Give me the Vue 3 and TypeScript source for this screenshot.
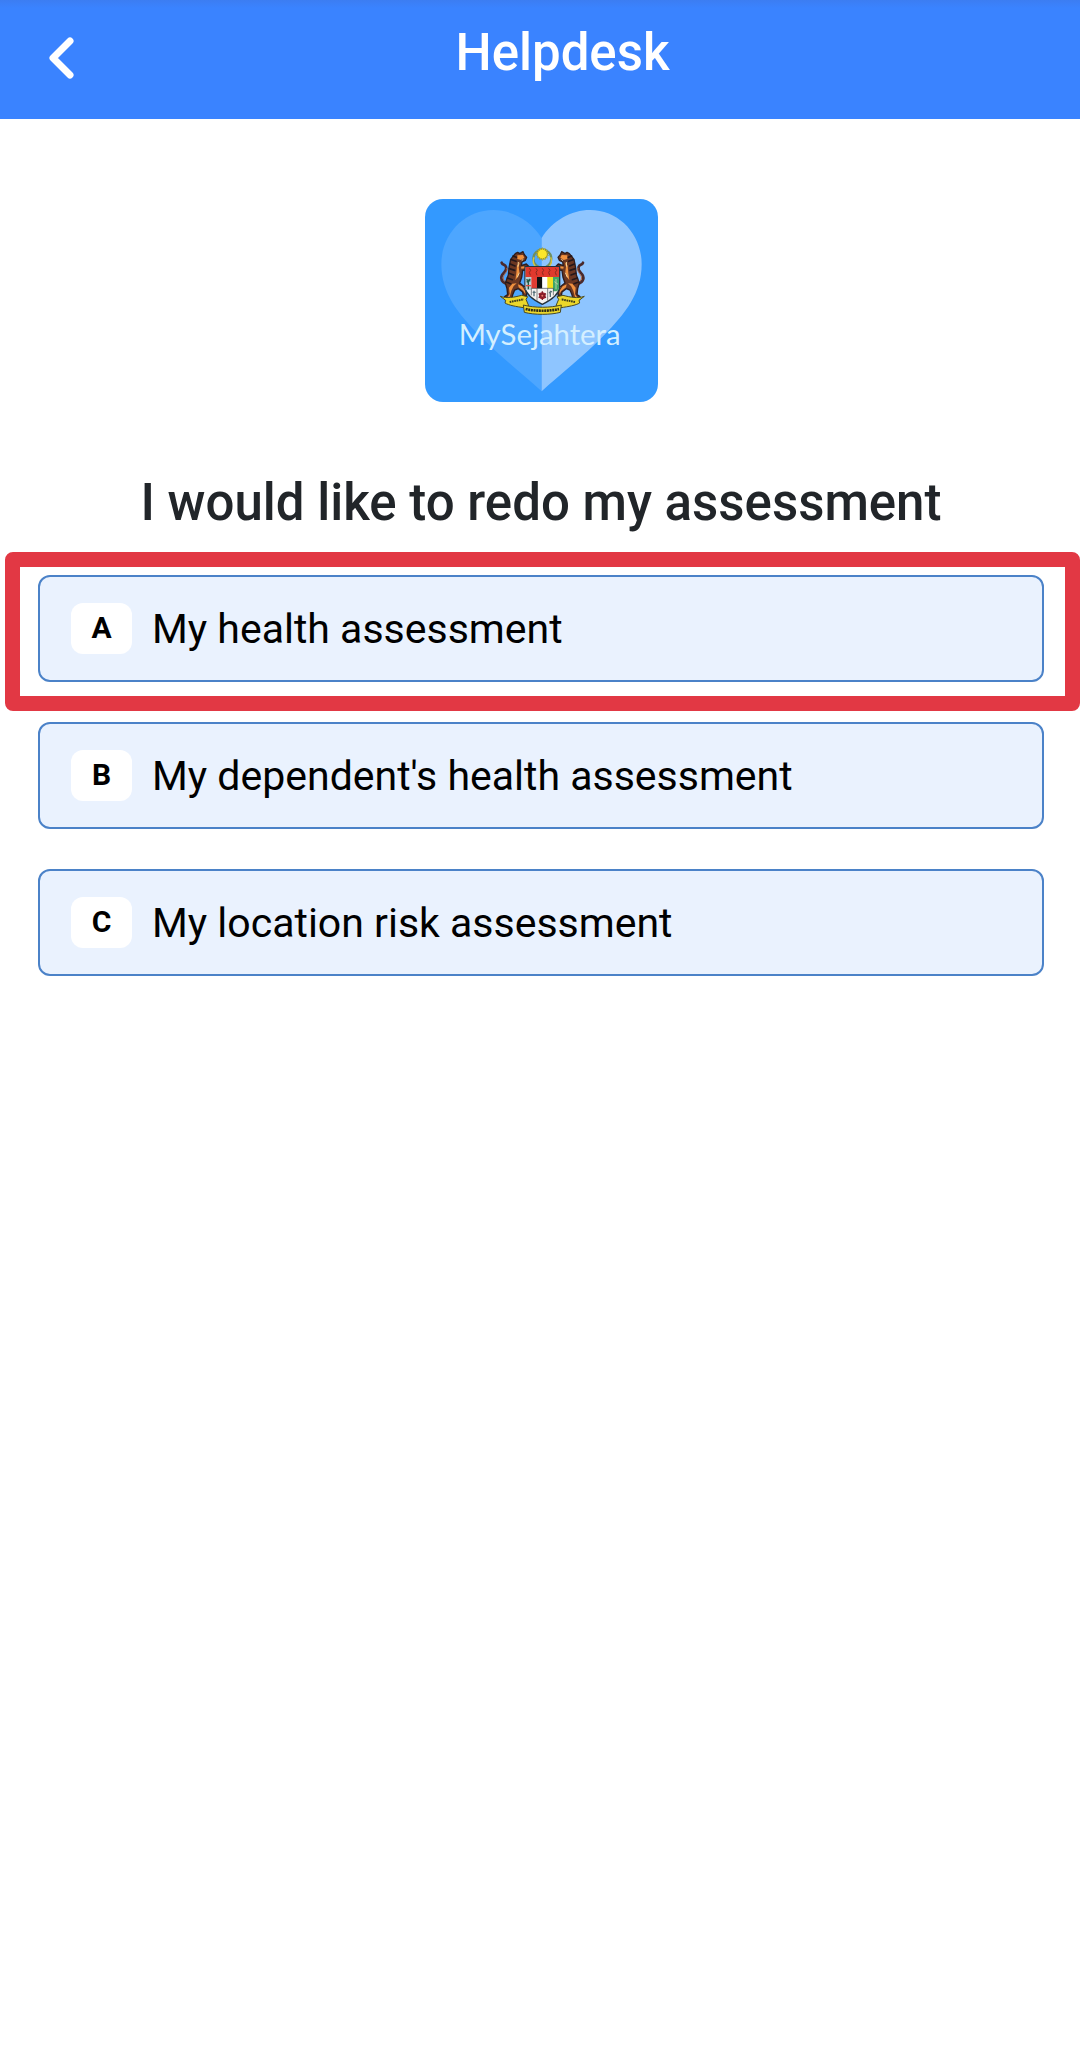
<script setup lang="ts">
interface Option {
  letter: string
  label: string
  highlighted?: boolean
}

const options: Option[] = [
  { letter: 'A', label: 'My health assessment', highlighted: true },
  { letter: 'B', label: "My dependent's health assessment" },
  { letter: 'C', label: 'My location risk assessment' },
]

const rays = Array.from({ length: 14 }, (_, i) => (i * 360) / 14)
const krises = [360, 380, 399, 418, 438]
</script>

<template>
  <div class="page">
    <header class="bar">
      <button class="back" type="button" aria-label="Back">
        <svg width="26" height="44" viewBox="0 0 26 44" fill="none" aria-hidden="true">
          <path d="M22 5 L5 22 L22 39" stroke="#fff" stroke-width="7" stroke-linecap="round" stroke-linejoin="round" />
        </svg>
      </button>
      <h1 class="title">Helpdesk</h1>
    </header>

    <main class="content">
      <svg class="logo" viewBox="47 57 699 609" role="img" aria-label="MySejahtera">
        <rect x="47" y="57" width="699" height="609" rx="54" fill="#3399ff" />
        <path d="M397 174 C365 122 308 90 252 90 C164 90 96 164 96 252 C96 340 146 400 210 466 C272 530 338 580 397 634 Z" fill="#4da6ff" />
        <path d="M397 174 C429 122 486 90 542 90 C630 90 697 164 697 252 C697 340 648 400 584 466 C522 530 456 580 397 634 Z" fill="#8ec5ff" />

        <!-- crescent and star -->
        <circle cx="399" cy="236" r="27" fill="none" stroke="#6f8f62" stroke-width="7" />
        <path d="M374 232 A27 27 0 1 0 424 232" fill="none" stroke="#d9c63c" stroke-width="4" />
        <circle cx="399" cy="222" r="17" fill="#8b8a32" />
        <path v-for="r in rays" :key="r" d="M396 212 L399 202 L402 212 Z" fill="#f2dc22" stroke="#8b8a32" stroke-width="1" :transform="`rotate(${r} 399 222)`" />
        <circle cx="399" cy="222" r="13" fill="#fbe62a" />

        <!-- tiger supporters, mirrored around the shield -->
        <g id="supporter">
          <path d="M300 310 C286 314 272 302 277 288 C281 276 294 274 290 261 C288 253 280 256 277 248" fill="none" stroke="#4a2a2c" stroke-width="8" stroke-linecap="round" />
          <path d="M298 307 C289 309 279 300 282 290 C286 280 296 274 292 264" fill="none" stroke="#b9653a" stroke-width="3" />
          <path d="M318 221 L325 217 L331 221 L341 215 L345 224 L352 232 L348 241 L338 246 L336 257 L351 252 L360 261 L355 270 L340 271 L337 292 L331 309 L345 320 L353 334 L351 348 L342 348 L340 336 L327 326 L316 330 L310 344 L307 361 L287 359 L286 350 L295 344 L293 326 L288 309 L297 285 L299 264 L304 238 Z" fill="#6b3722" stroke="#2f1d1d" stroke-width="4" stroke-linejoin="round" />
          <path d="M324 226 L341 225 L345 233 L335 240 L324 237 Z M332 246 L328 260 L330 275 L325 291 L318 301 L321 280 L323 257 Z M335 260 L352 258 L352 264 L336 266 Z M309 311 L322 310 L313 318 L306 332 L300 355 L293 354 L301 342 L299 323 Z M326 313 L338 319 L347 332 L348 343 L342 333 L328 322 Z" fill="#f0913f" />
          <path d="M307 239 L320 244 M303 252 L317 258 M300 266 L316 271 M299 280 L313 285 M294 294 L309 299 M292 307 L304 311 M311 228 L321 232" stroke="#24171a" stroke-width="5" stroke-linecap="round" />
          <path d="M327 246 L326 260 M330 278 L324 292 M337 242 L342 238 M346 321 L350 330" stroke="#f7d69a" stroke-width="3" />
        </g>
        <use href="#supporter" transform="translate(798 0) scale(-1 1)" />

        <!-- shield -->
        <path d="M347 260 H451 V322 C449 344 425 360 399 373 C373 360 349 344 347 322 Z" fill="#f5f3f1" stroke="#26333d" stroke-width="4" />
        <path d="M349 261 H449 V291 H349 Z" fill="#e0392d" />
        <path v-for="x in krises" :key="x" :d="`M${x} 265 l4 6 l-4 6 l3 9`" fill="none" stroke="#872a1f" stroke-width="3" />
        <rect x="349" y="291" width="17" height="39" fill="#b9d0d8" />
        <path d="M357 328 V300 M351 299 L363 303 M352 307 L363 297" stroke="#225b43" stroke-width="4" />
        <path d="M350 317 H365" stroke="#df4c40" stroke-width="4" />
        <rect x="366" y="291" width="17" height="34" fill="#e23c32" />
        <rect x="383" y="291" width="16" height="34" fill="#101010" />
        <rect x="399" y="291" width="15" height="34" fill="#ffffff" />
        <rect x="414" y="291" width="17" height="34" fill="#f4df22" />
        <path d="M431 291 H449 V324 L444 334 H431 Z" fill="#3fa568" />
        <path d="M440 297 V328 M435 305 L446 313" stroke="#b6d0a0" stroke-width="3" />
        <path d="M366 325 H432 M366 325 V346 M383 325 V362 M415 325 V362 M432 325 V346" stroke="#41484d" stroke-width="2" />
        <path d="M374 349 V332 M370 337 H379 M423 351 V332 M419 339 L428 334" stroke="#56717a" stroke-width="4" />
        <circle cx="399" cy="347" r="10" fill="#a7222e" />
        <path d="M399 334 V360 M388 341 L410 353 M388 353 L410 341" stroke="#7d1c28" stroke-width="4" />
        <circle cx="399" cy="347" r="3" fill="#ef7b6b" />

        <!-- motto ribbon -->
        <g id="ribbon-end">
          <path d="M273 349 C293 356 314 352 337 346 L355 350 L350 358 L358 377 L343 383 C322 380 298 376 287 369 L289 361 Z" fill="#ecd72b" stroke="#4b4b23" stroke-width="3" stroke-linejoin="round" />
          <path d="M301 366 L343 358" stroke="#3c3b1b" stroke-width="6" stroke-dasharray="5 2" />
        </g>
        <use href="#ribbon-end" transform="translate(798 0) scale(-1 1)" />
        <path d="M342 375 C375 384 423 384 456 375 L453 397 C424 405 374 405 345 397 Z" fill="#ecd72b" stroke="#4b4b23" stroke-width="3" stroke-linejoin="round" />
        <path d="M349 387 C380 394 418 394 449 387" fill="none" stroke="#2d2c16" stroke-width="8" stroke-dasharray="6 2" />

        <text class="wordmark" x="391" y="495" text-anchor="middle">MySejahtera</text>
      </svg>

      <h2 class="question">I would like to redo my assessment</h2>

      <ul class="options">
        <li v-for="option in options" :key="option.letter" class="item">
          <button class="option" type="button">
            <span class="letter">{{ option.letter }}</span>
            <span class="label">{{ option.label }}</span>
          </button>
          <span v-if="option.highlighted" class="frame" aria-hidden="true"></span>
        </li>
      </ul>
    </main>
  </div>
</template>

<style>
body {
  margin: 0;
  background: #fff;
}
</style>

<style scoped>
.page {
  font-family: Roboto, "Liberation Sans", sans-serif;
  min-height: 100vh;
  background: #fff;
  overflow-x: hidden;
}

.bar {
  display: flex;
  align-items: flex-start;
  box-sizing: border-box;
  height: 119px;
  padding-right: 74px;
  background: linear-gradient(#3c7df2, #3a83ff 8px);
}

.back {
  display: flex;
  align-items: center;
  width: 119px;
  height: 115px;
  padding: 0 0 0 48px;
  border: 0;
  background: none;
  cursor: pointer;
}

.title {
  flex: 1;
  margin: 0;
  padding-top: 21px;
  color: #fff;
  font-size: 51px;
  font-weight: 500;
  line-height: 64px;
  text-align: center;
}

.content {
  display: flex;
  flex-direction: column;
  align-items: center;
  padding: 80px 36px 0 38px;
}

.logo {
  display: block;
  width: 233px;
  height: 203px;
}

.wordmark {
  fill: #d4efff;
  font-family: Lato, sans-serif;
  font-size: 88px;
  font-weight: 400;
}

.question {
  margin: 69px 0 0;
  color: #212529;
  font-size: 51px;
  font-weight: 500;
  line-height: 64px;
  text-align: center;
}

.options {
  display: flex;
  flex-direction: column;
  gap: 40px;
  align-self: stretch;
  margin: 40px 0 0;
  padding: 0;
  list-style: none;
}

.item {
  position: relative;
}

.option {
  display: flex;
  align-items: center;
  gap: 20px;
  box-sizing: border-box;
  width: 100%;
  min-height: 107px;
  padding: 0 31px;
  border: 2px solid #4b82c8;
  border-radius: 12px;
  background: #eaf2fe;
  color: #000;
  font-family: inherit;
  text-align: left;
  cursor: pointer;
}

.letter {
  box-sizing: border-box;
  width: 61px;
  height: 51px;
  border-radius: 12px;
  background: #fff;
  font-size: 30px;
  font-weight: 700;
  line-height: 50px;
  text-align: center;
}

.label {
  font-size: 41px;
  line-height: 48px;
}

.frame {
  position: absolute;
  inset: -23px -36px -29px -33px;
  border: 15px solid #e23844;
  border-radius: 8px;
  pointer-events: none;
}
</style>
